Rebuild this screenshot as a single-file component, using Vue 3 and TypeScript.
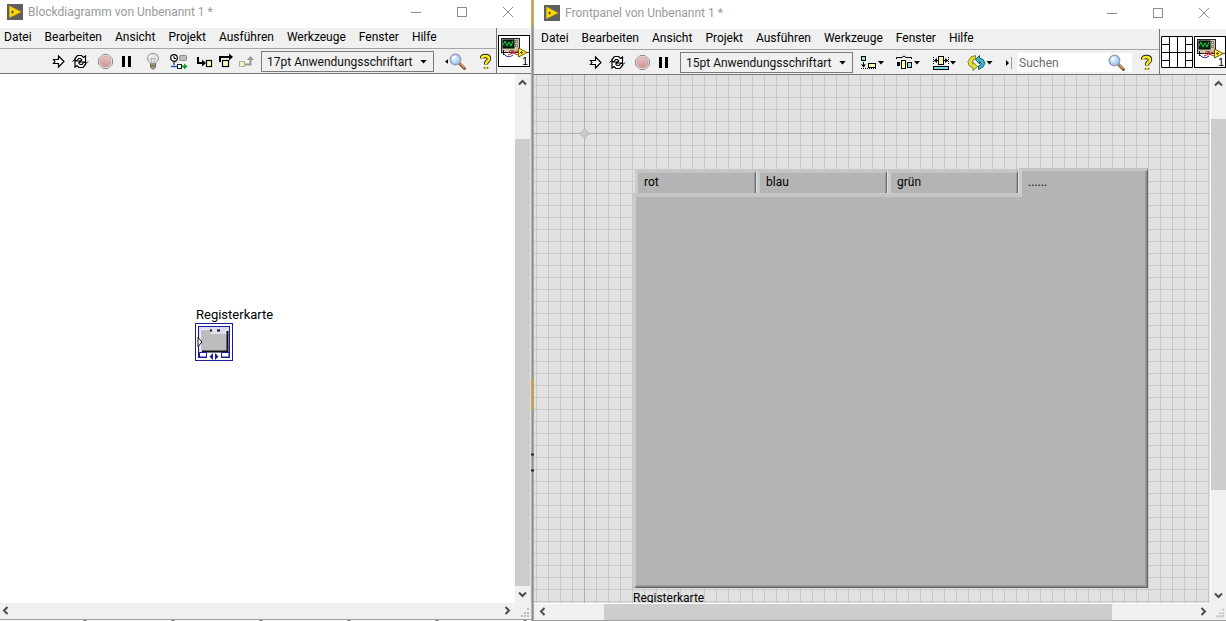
<script setup lang="ts">
import { ref } from 'vue'

interface Tool { icon: string; label: string; group?: boolean }

const menus = ['Datei', 'Bearbeiten', 'Ansicht', 'Projekt', 'Ausführen', 'Werkzeuge', 'Fenster', 'Hilfe']

const runTools: Tool[] = [
  { icon: 'run', label: 'Ausführen' },
  { icon: 'loop', label: 'Wiederholt ausführen' },
  { icon: 'abort', label: 'Abbrechen', group: true },
  { icon: 'pause', label: 'Pause' },
]
const debugTools: Tool[] = [
  { icon: 'bulb', label: 'Highlight-Funktion', group: true },
  { icon: 'retain', label: 'Werte beibehalten', group: true },
  { icon: 'into', label: 'Hineinspringen', group: true },
  { icon: 'over', label: 'Überspringen' },
  { icon: 'out', label: 'Herausspringen' },
]
const layoutTools: Tool[] = [
  { icon: 'align', label: 'Objekte ausrichten' },
  { icon: 'spread', label: 'Objekte verteilen' },
  { icon: 'resize', label: 'Objektgröße' },
  { icon: 'order', label: 'Neuordnen' },
]
const tabs = ['rot', 'blau', 'grün', '......']
const active = ref(3)
const query = ref('')
</script>

<template>
  <svg class="sprite" aria-hidden="true">
    <defs>
      <linearGradient id="redfill" x1="0" y1="0" x2="0" y2="1">
        <stop offset="0" stop-color="#e8c2c2" /><stop offset="1" stop-color="#d09494" />
      </linearGradient>
      <radialGradient id="lens" cx=".35" cy=".35" r=".7">
        <stop offset="0" stop-color="#eefaff" /><stop offset="1" stop-color="#8cc4ea" />
      </radialGradient>
    </defs>
    <symbol id="labview" viewBox="0 0 16 16">
      <rect width="16" height="16" fill="#5f5f5f" />
      <path d="M2.500 2 L14 8 L2.500 13.500Z" fill="#ffd60a" stroke="#e8bd00" stroke-width=".6" />
      <path d="M4 8H7M5.500 6.500V9.500" stroke="#5c4d00" fill="none" />
    </symbol>
    <symbol id="run" viewBox="0 0 20 20">
      <path d="M4.500 7.500H9.500V4L15 9.500L9.500 15V11.500H4.500L6 9.500Z" fill="#fff" stroke="#000" stroke-width="1.200" />
    </symbol>
    <symbol id="loop" viewBox="0 0 20 20">
      <path d="M5 8.500V6.500L7.500 3.500H11.500L13.500 5.500L15.500 4V10H10L11.800 8L10.500 6.500H8.500L7 8.500Z" fill="#fff" stroke="#000" stroke-width="1.200" />
      <path d="M15.500 10.500V12.500L13 15.500H9L7 13.500L5 15V9H10.500L8.700 11L10 12.500H12L13.500 10.500Z" fill="#fff" stroke="#000" stroke-width="1.200" />
      <path d="M2.500 9.500L6 6.500M14.500 13L18 9.500" stroke="#000" />
    </symbol>
    <symbol id="abort" viewBox="0 0 20 20">
      <path d="M7 2.500H12L16.500 7V12L12 16.500H7L2.500 12V7Z" fill="#f4eeee" stroke="#8c8c8c" />
      <path d="M7.300 4H11.700L15 7.300V11.700L11.700 15H7.300L4 11.700V7.300Z" fill="url(#redfill)" stroke="#cfa5a5" stroke-width=".7" />
    </symbol>
    <symbol id="pause" viewBox="0 0 20 20"><path d="M5 4h3v11h-3zM11 4h3v11h-3z" fill="#000" /></symbol>
    <symbol id="bulb" viewBox="0 0 20 20">
      <path d="M10 1.500C6.500 1.500 4.500 4 4.500 6.500C4.500 9 7.500 10 7.500 12H12.500C12.500 10 15.500 9 15.500 6.500C15.500 4 13.500 1.500 10 1.500Z" fill="#e6e6e6" stroke="#8c8c8c" />
      <path d="M9 11L8 6L10 7L12 6L11 11" fill="none" stroke="#a4a4a4" stroke-width=".8" />
      <path d="M6.300 6Q6.500 3.800 9 3.300" fill="none" stroke="#fff" stroke-width="1.400" />
      <path d="M7.500 12H12.500V15L11 17H9L7.500 15Z" fill="#b9ad87" stroke="#666" stroke-width=".9" />
      <path d="M7.500 14H12.500" stroke="#554e3a" />
    </symbol>
    <symbol id="retain" viewBox="0 0 20 20">
      <circle cx="5" cy="6" r="3.300" fill="#fff" stroke="#000" stroke-width="1.200" />
      <path d="M5 4V6.500H7M5 9V13" fill="none" stroke="#000" />
      <rect x="10.500" y="3.500" width="7" height="5" rx="1" fill="#bcbcbc" stroke="#888" />
      <path d="M2 14.500H9" stroke="#1848c0" stroke-width="1.400" />
      <rect x="8.500" y="12.500" width="4" height="4" fill="#fff" stroke="#123" />
      <path d="M13 14.500H17" stroke="#00a020" stroke-width="2" /><path d="M15 11.500L18.500 14.500L15 17.500Z" fill="#0a9c20" />
    </symbol>
    <symbol id="into" viewBox="0 0 20 20">
      <path d="M3 5V11H8" fill="none" stroke="#000" stroke-width="2" /><path d="M7 7.500L11 11L7 14.500Z" />
      <rect x="11.500" y="8.500" width="5" height="6" fill="#ffffc4" stroke="#000" stroke-width="1.200" />
    </symbol>
    <symbol id="over" viewBox="0 0 20 20">
      <path d="M4 10V5H13" fill="none" stroke="#000" stroke-width="2" /><path d="M13 1.500L17 5L13 8.500Z" />
      <rect x="6.500" y="8.500" width="6" height="6" fill="#ffffc4" stroke="#000" stroke-width="1.200" />
    </symbol>
    <symbol id="out" viewBox="0 0 20 20">
      <path d="M8 12.500H13.500V7" fill="none" stroke="#999" stroke-width="2" /><path d="M10 8L13.500 4L17 8Z" fill="#999" />
      <rect x="2.500" y="9.500" width="5" height="5" fill="#f6f3c8" stroke="#b0b0a0" />
    </symbol>
    <symbol id="align" viewBox="0 0 26 20">
      <rect x="2.500" y="3.500" width="4" height="4" fill="#90e0e8" stroke="#000" />
      <path d="M4.500 9V13" stroke="#000" /><path d="M2 11.500H7L4.500 14.500Z" />
      <path d="M2 15.500H17" stroke="#000" stroke-dasharray="1 1" />
      <rect x="9.500" y="10.500" width="7" height="4" fill="#ffffb0" stroke="#000" />
      <path d="M19 8H25L22 11.500Z" />
    </symbol>
    <symbol id="spread" viewBox="0 0 26 20">
      <path d="M1.500 6V4.500H7L9 3L11 4.500H16.500V6" fill="none" stroke="#000" />
      <path d="M2 9h3v4h-3z" /><rect x="6.500" y="7.500" width="4" height="8" fill="#ffffb0" stroke="#000" /><rect x="12.500" y="9.500" width="4" height="5" fill="#90e0e8" stroke="#000" />
      <path d="M19 8H25L22 11.500Z" />
    </symbol>
    <symbol id="resize" viewBox="0 0 26 20">
      <path d="M2.500 4V12M17.500 4V12" stroke="#000" stroke-dasharray="1 1" />
      <path d="M3 7.500H7M13 7.500H17" stroke="#000" /><path d="M6 5L3 7.500L6 10ZM14 5L17 7.500L14 10Z" />
      <rect x="7.500" y="3.500" width="5" height="8" fill="#ffffb0" stroke="#000" />
      <rect x="2.500" y="13.500" width="15" height="3" fill="#7fdbe3" stroke="#000" />
      <path d="M19 8H25L22 11.500Z" />
    </symbol>
    <symbol id="order" viewBox="0 0 26 20">
      <path d="M8.500 2.500L4 4L1 8.500L2 12.500L6 15V17.500L10.500 13.500L6 9.500V11.500L5 9.500L6 7L8.500 6Z" fill="#e8e03c" stroke="#87821c" />
      <path d="M8.500 6.500L12.500 2.500V5L16 6.500L18 10L16 14L11.500 16.500V13L13.500 12L14 10L12.500 8.500V11Z" fill="#42b4c6" stroke="#17606e" />
      <path d="M19.500 8H25.500L22.500 11.500Z" />
    </symbol>
    <symbol id="search" viewBox="0 0 18 18">
      <path d="M10.500 10.500L15.500 15.500" stroke="#7c5038" stroke-width="3" stroke-linecap="round" />
      <path d="M11 10.500L15.500 15" stroke="#d89c64" stroke-width="1.200" />
      <circle cx="6.500" cy="6.500" r="5.200" fill="url(#lens)" stroke="#9b9dc0" stroke-width="1.500" />
      <path d="M3.500 6Q4 3.500 6.500 3.500" stroke="#fff" stroke-width="1.300" fill="none" />
    </symbol>
    <symbol id="help" viewBox="0 0 14 18">
      <g fill="none" stroke-linejoin="round">
        <path d="M3 5.500Q3 3 6.500 3Q10 3 10 5.800Q10 7.500 8 8.700Q7 9.500 7 11.500M7 14V15.500" stroke="#222" stroke-width="4.400" />
        <path d="M3 5.500Q3 3 6.500 3Q10 3 10 5.800Q10 7.500 8 8.700Q7 9.500 7 11.200M7 13.200V15.500" stroke="#f8ee1c" stroke-width="2.600" />
      </g>
    </symbol>
    <symbol id="vi" viewBox="0 0 32 32">
      <rect x=".5" y=".5" width="31" height="31" fill="#fff" stroke="#000" />
      <rect x="3.500" y="3.500" width="18" height="14" fill="#c9c4aa" stroke="#222" />
      <rect x="5" y="5" width="11" height="8" fill="#062f12" stroke="#000" />
      <path d="M5 10L7 6L9 11L11 7L13 11L15 6" fill="none" stroke="#25c34a" />
      <path d="M17.500 5.500h2v2h-2zM17.500 9.500h2v2h-2z" fill="#eee" stroke="#554" stroke-width=".7" />
      <path d="M5.500 15v5M3 17.500h5M15 15v3" stroke="#111" />
      <path d="M6 19Q10 24 15 20" fill="none" stroke="#2828a0" />
      <path d="M10 18L13 15L15 18L19 16H22M10 20L15 18L20 20" fill="none" stroke="#d22" />
      <path d="M20.500 13L29 17.500L20.500 22Z" fill="#fff02a" stroke="#745c00" /><path d="M22 17.500H25M23.500 16V19M28 17.500H31" stroke="#6a4b00" />
    </symbol>
  </svg>

  <div class="desktop">
    <section class="window">
      <header class="title">
        <svg class="logo"><use href="#labview" /></svg>
        <h1>Blockdiagramm von Unbenannt 1 *</h1>
        <div class="caption">
          <button aria-label="Minimieren"><svg viewBox="0 0 12 12"><path d="M1 6.500H11" /></svg></button>
          <button aria-label="Maximieren"><svg viewBox="0 0 12 12"><rect x="1.500" y="1.500" width="9" height="9" /></svg></button>
          <button aria-label="Schließen"><svg viewBox="0 0 12 12"><path d="M1 1L11 11M11 1L1 11" /></svg></button>
        </div>
      </header>
      <div class="head">
        <div class="bars">
          <nav class="menu"><button v-for="m in menus" :key="m">{{ m }}</button></nav>
          <div class="tools">
            <button v-for="t in [...runTools, ...debugTools]" :key="t.icon" class="tool" :class="{ group: t.group }" :aria-label="t.label"><svg><use :href="'#' + t.icon" /></svg></button>
            <div class="font debug">
              <select aria-label="Schriftart"><option>17pt Anwendungsschriftart</option></select>
              <svg viewBox="0 0 8 5"><path d="M0 0H8L4 4.500Z" /></svg>
            </div>
            <button class="find" aria-label="Suchen">
              <svg class="tick" viewBox="0 0 4 6"><path d="M4 0V6L0 3Z" /></svg>
              <svg class="glass"><use href="#search" /></svg>
            </button>
            <button class="help" aria-label="Hilfe"><svg><use href="#help" /></svg></button>
          </div>
        </div>
        <div class="vi">
          <svg class="viicon" viewBox="0 0 32 32"><use href="#vi" /><text x="24" y="30">1</text></svg>
        </div>
      </div>
      <div class="work">
        <div class="canvas diagram">
          <div class="node">
            <span>Registerkarte</span>
            <svg viewBox="0 0 38 38">
              <rect x=".5" y=".5" width="37" height="37" fill="#fff" stroke="#1c1c9c" />
              <rect x="3.500" y="3.500" width="31" height="31" fill="#dcdcf4" stroke="#1c1c9c" />
              <path d="M6 7H15V10H32V28H6Z" fill="#bdbdbd" />
              <path d="M5.500 28V8L7 6.500H14.500M17.500 8H23" fill="none" stroke="#f2f2f2" />
              <path d="M15.500 7V10M16 10.500H32" fill="none" stroke="#e6e6e6" />
              <path d="M15 7.500H17M22 7.500H25" stroke="#111" stroke-width="2" />
              <path d="M32.500 8V28.500H7" fill="none" stroke="#111" stroke-width="2" />
              <path d="M4.500 29.500H11.500V34H4.500ZM26.500 29.500H34V34H26.500Z" fill="#fff" stroke="#1c1c9c" />
              <path d="M12 30H26V37H12Z" fill="#fff" />
              <path d="M18 30V37L14.500 33.500ZM20 30V37L23.500 33.500Z" fill="#1c1c9c" />
              <path d="M3 14.500L7 19L3 23.500Z" fill="#fff" stroke="#111" />
            </svg>
          </div>
        </div>
        <div class="vscroll">
          <button aria-label="Nach oben"><svg viewBox="0 0 9 9"><path d="M1 6.500L4.500 3L8 6.500" /></svg></button>
          <div class="track"><i class="gap-dv"></i><b class="thumb-dv"></b></div>
          <button aria-label="Nach unten"><svg viewBox="0 0 9 9"><path d="M1 2.500L4.500 6L8 2.500" /></svg></button>
        </div>
        <div class="hscroll">
          <button aria-label="Nach links"><svg viewBox="0 0 9 9"><path d="M6.500 1L3 4.500L6.500 8" /></svg></button>
          <div class="track"></div>
          <button aria-label="Nach rechts"><svg viewBox="0 0 9 9"><path d="M2.500 1L6 4.500L2.500 8" /></svg></button>
        </div>
        <svg class="grip" viewBox="0 0 16 16"><path d="M12 5h2v2h-2zM9 9h2v2h-2zM12 9h2v2h-2zM6 12h2v2h-2zM9 12h2v2h-2zM12 12h2v2h-2z" /></svg>
      </div>
      <div class="under"></div>
    </section>

    <div class="seam"></div>

    <section class="window panelwin">
      <header class="title">
        <svg class="logo"><use href="#labview" /></svg>
        <h1>Frontpanel von Unbenannt 1 *</h1>
        <div class="caption">
          <button aria-label="Minimieren"><svg viewBox="0 0 12 12"><path d="M1 6.500H11" /></svg></button>
          <button aria-label="Maximieren"><svg viewBox="0 0 12 12"><rect x="1.500" y="1.500" width="9" height="9" /></svg></button>
          <button aria-label="Schließen"><svg viewBox="0 0 12 12"><path d="M1 1L11 11M11 1L1 11" /></svg></button>
        </div>
      </header>
      <div class="head">
        <div class="bars">
          <nav class="menu"><button v-for="m in menus" :key="m">{{ m }}</button></nav>
          <div class="tools">
            <button v-for="t in runTools" :key="t.icon" class="tool" :class="{ group: t.group }" :aria-label="t.label"><svg><use :href="'#' + t.icon" /></svg></button>
            <div class="font">
              <select aria-label="Schriftart"><option>15pt Anwendungsschriftart</option></select>
              <svg viewBox="0 0 8 5"><path d="M0 0H8L4 4.500Z" /></svg>
            </div>
            <div class="layout">
              <button v-for="t in layoutTools" :key="t.icon" :aria-label="t.label"><svg><use :href="'#' + t.icon" /></svg></button>
            </div>
            <svg class="collapse" viewBox="0 0 8 12"><path d="M1 3V9L4 6Z" /><path d="M6 0h1v12h-1z" fill="#999" /></svg>
            <label class="searchbox">
              <input v-model="query" type="text" placeholder="Suchen" aria-label="Suchen" />
              <svg class="glass"><use href="#search" /></svg>
            </label>
            <button class="help" aria-label="Hilfe"><svg><use href="#help" /></svg></button>
          </div>
        </div>
        <div class="vi">
          <svg class="viicon" viewBox="0 0 32 32">
            <rect width="32" height="32" fill="#fff" />
            <path d="M.5.5H31.500V31.500H.5ZM8.500 0V32M16.500 0V32M24.500 0V32M0 8.500H8M0 16.500H32M0 24.500H8M24 8.500H32M24 24.500H32" fill="none" stroke="#000" />
          </svg>
          <svg class="viicon" viewBox="0 0 32 32"><use href="#vi" /><text x="24" y="30">1</text></svg>
        </div>
      </div>
      <div class="work">
        <div class="canvas front">
          <i class="axis-x"></i><i class="axis-y"></i>
          <svg class="origin" viewBox="0 0 11 11"><path d="M5.500 .5L10.500 5.500L5.500 10.500L.5 5.500Z" /></svg>
          <div class="control">
            <div class="tabs" role="tablist">
              <button v-for="(t, i) in tabs" :key="t" role="tab" :aria-selected="active === i" :class="{ on: active === i }" @click="active = i">{{ t }}</button>
            </div>
            <div class="page" role="tabpanel"></div>
            <span>Registerkarte</span>
          </div>
        </div>
        <div class="vscroll">
          <button aria-label="Nach oben"><svg viewBox="0 0 9 9"><path d="M1 6.500L4.500 3L8 6.500" /></svg></button>
          <div class="track"><i class="gap-pv"></i><b class="thumb-pv"></b><i class="rest-pv"></i></div>
          <button aria-label="Nach unten"><svg viewBox="0 0 9 9"><path d="M1 2.500L4.500 6L8 2.500" /></svg></button>
        </div>
        <div class="hscroll">
          <button aria-label="Nach links"><svg viewBox="0 0 9 9"><path d="M6.500 1L3 4.500L6.500 8" /></svg></button>
          <div class="track"><i class="gap-ph"></i><b class="thumb-ph"></b><i class="rest-ph"></i></div>
          <button aria-label="Nach rechts"><svg viewBox="0 0 9 9"><path d="M2.500 1L6 4.500L2.500 8" /></svg></button>
        </div>
        <svg class="grip" viewBox="0 0 16 16"><path d="M12 5h2v2h-2zM9 9h2v2h-2zM12 9h2v2h-2zM6 12h2v2h-2zM9 12h2v2h-2zM12 12h2v2h-2z" /></svg>
      </div>
      <div class="under"></div>
    </section>
  </div>
</template>

<style>
body { margin: 0; overflow: hidden; }
</style>

<style scoped>
* { box-sizing: border-box; }
svg { display: block; flex: none; }
button { display: flex; align-items: center; justify-content: center; border: 0; padding: 0; background: none; font: inherit; color: inherit; }
.sprite { position: absolute; width: 0; height: 0; }
.desktop { display: grid; grid-template-columns: minmax(0, 531fr) 3px minmax(0, 692fr); height: 100vh; font: 12px/16px Roboto, "Open Sans", sans-serif; color: #000; background: #fff; }
.window { display: flex; flex-direction: column; min-width: 0; min-height: 0; }
.seam { background: linear-gradient(#c8a85a 0 22px, transparent 30px 378px, #bea35c 380px 409px, transparent 411px 453px, #222 454px 455px, transparent 456px 469px, #222 470px 471px, transparent 472px), linear-gradient(90deg, #b4b4b4 0 1px, #8e8e92 1px 2px, #a6a6a8 2px); }
.title { display: flex; align-items: center; flex: none; height: 28px; padding-left: 7px; padding-bottom: 4px; background: #fff; }
.panelwin .title { height: 29px; padding-left: 10px; }
.logo { width: 16px; height: 16px; }
h1 { flex: 1; margin: 0 0 0 5px; font-size: 12px; font-weight: 400; color: #999; white-space: nowrap; }
.caption { display: flex; }
.caption button { width: 46px; height: 24px; }
.caption svg { width: 12px; height: 12px; fill: none; stroke: #8c8c8c; }
.panelwin .caption { margin-right: -1px; }
.head { display: flex; flex: none; background: #f0f0f0; border-bottom: 1px solid #777; }
.bars { flex: 1; min-width: 0; border-right: 1px solid #777; }
.menu { display: flex; gap: 13px; height: 21px; padding: 0 0 2px 4px; border-bottom: 1px solid #a4a4a4; }
.panelwin .menu { padding-left: 7px; }
.tools { display: flex; align-items: center; height: 24px; padding: 1px 0 0 49px; gap: 1px; }
.panelwin .tools { padding-left: 52px; }
.tool svg { width: 20px; height: 20px; }
.tool { width: 20px; height: 20px; }
.tool.group { margin-left: 5px; }
.font { position: relative; flex: none; width: 173px; margin-left: 5px; }
.font.debug { margin-left: 3px; }
.font select { display: block; width: 100%; height: 21px; padding: 0 0 0 5px; border: 1px solid #7a7a7a; border-radius: 0; background: #f0f0f0; appearance: none; font: inherit; color: #111; }
.font svg { position: absolute; right: 7px; top: 9px; width: 7px; height: 4px; pointer-events: none; }
.find { margin-left: 10px; }
.tick { width: 3px; height: 5px; }
.glass { width: 18px; height: 18px; }
.find .glass { margin-left: 1px; }
.help { margin-left: 11px; }
.help svg { width: 14px; height: 18px; }
.layout { display: flex; gap: 10px; margin-left: 5px; }
.layout svg { width: 26px; height: 20px; }
.collapse { width: 8px; height: 12px; margin-left: 11px; }
.searchbox { display: flex; align-items: center; width: 115px; height: 19px; margin-left: 3px; padding-right: 6px; background: #fff; }
.searchbox input { flex: 1; width: 0; min-width: 0; border: 0; padding: 0 0 0 2px; background: none; outline: 0; font: inherit; color: #111; }
.searchbox input::placeholder { color: #6b6b6b; opacity: 1; }
.searchbox + .help { margin-left: 7px; }
.vi { display: flex; flex: none; align-items: center; gap: 1px; padding: 0 1px; }
.panelwin .vi { padding-right: 0; }
.viicon { width: 32px; height: 32px; }
.viicon text { font: 11px "Liberation Sans", sans-serif; fill: #000; }
.work { display: grid; grid-template: minmax(0, 1fr) 16px / minmax(0, 1fr) 16px; flex: 1; min-height: 0; background: #f0f0f0; }
.panelwin .work { grid-template-columns: minmax(0, 1fr) 15px; }
.canvas { position: relative; overflow: hidden; }
.diagram { background: #fff; }
.front { background-color: #e1e1e1; background-image: linear-gradient(90deg, #c8c8c8 1px, transparent 1px), linear-gradient(#c8c8c8 1px, transparent 1px); background-size: 12px 12px; background-position: 2px 10px; border-right: 1px solid #fff; border-bottom: 1px solid #fff; }
.node { position: absolute; left: 195px; top: 232px; }
.node span { display: block; padding-left: 1px; font-size: 13px; line-height: 17px; }
.node svg { width: 38px; height: 38px; }
.vscroll { display: flex; flex-direction: column; border-right: 1px solid #e0e0e0; }
.panelwin .vscroll { border-right: 0; }
.vscroll button { height: 17px; }
.vscroll .track { display: flex; flex-direction: column; flex: 1; }
.hscroll { display: flex; }
.hscroll button { width: 16px; }
.hscroll .track { display: flex; flex: 1; }
.vscroll button svg, .hscroll button svg { width: 9px; height: 9px; fill: none; stroke: #4c4c4c; stroke-width: 2; }
.hscroll button { padding: 0 5px 1px 0; }
.panelwin .hscroll button { padding: 0 0 1px; }
.hscroll .track + button { padding: 0 0 1px 1px; }
.track b { background: #cdcdcd; }
.gap-dv { flex: 48; } .thumb-dv { flex: 447; }
.gap-pv { flex: 27; } .thumb-pv { flex: 371; } .rest-pv { flex: 97; }
.gap-ph { flex: 54; } .thumb-ph { flex: 508; } .rest-ph { flex: 83; }
.grip { width: 16px; height: 16px; fill: #bdbdbd; }
.panelwin .grip { width: 15px; height: 15px; }
.under { flex: none; height: 2px; border-top: 1px solid #a0a0a0; background: repeating-linear-gradient(90deg, #fff 0 83px, #777 84px 86px, #fff 87px 88px); }
.panelwin .under { height: 1px; }
.axis-x { position: absolute; left: 0; right: 0; top: 58px; height: 1px; background: #b0b0b0; }
.axis-y { position: absolute; top: 0; bottom: 0; left: 50px; width: 1px; background: #b0b0b0; }
.origin { position: absolute; left: 45px; top: 53px; width: 11px; height: 11px; fill: #c8c8c8; stroke: #a4a4a4; stroke-dasharray: 1 1; }
.control { position: absolute; left: 99px; top: 93px; width: 515px; }
.tabs { display: grid; grid-template-columns: 122px 131px 131px 1fr; align-items: end; padding-left: 2px; }
.tabs button { justify-content: flex-start; height: 23px; margin: 0 1px 1px 0; padding: 0 0 2px 6px; border-style: solid; border-width: 3px 1px 0 3px; border-color: #c4c4c4 #6e6e6e #c4c4c4 #cbcbcb; background: #b4b4b4; box-shadow: inset -1px 0 #999; }
.tabs button.on { position: relative; height: 29px; margin: 0 0 -3px; padding: 0 0 5px 6px; border-right-width: 1px; border-right-color: #666; box-shadow: inset -1px 0 #8a8a8a, inset -2px 0 #a0a0a0; }
.page { height: 394px; border-style: solid; border-width: 3px 1px 1px 3px; border-color: #c5c5c5 #666 #606060 #cbcbcb; background: #b4b4b4; box-shadow: inset -1px -1px #888, inset -2px -2px #9e9e9e; }
.control > span { display: block; margin-top: 2px; line-height: 16px; }
</style>
